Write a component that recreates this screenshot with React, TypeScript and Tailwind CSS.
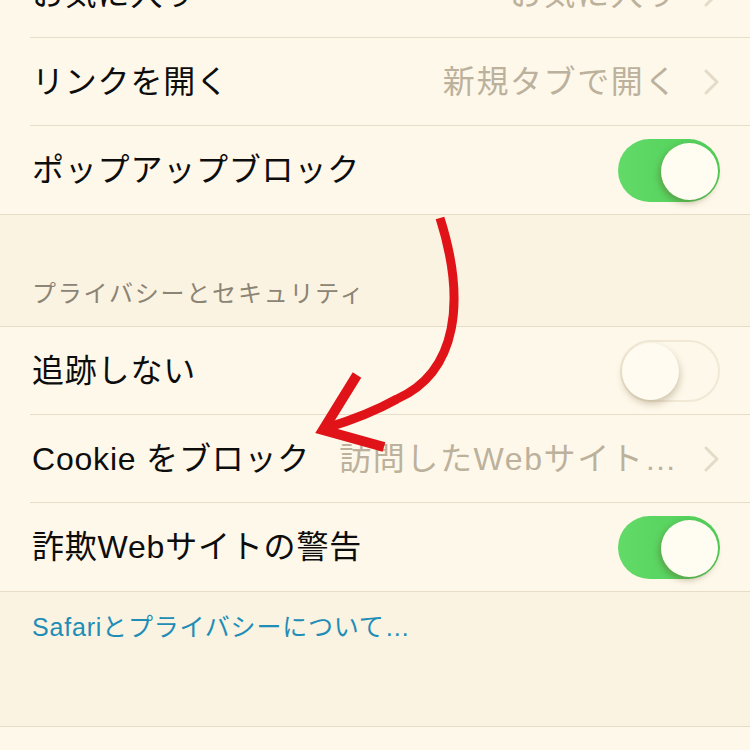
import type { ReactNode } from 'react';

const font = { fontFamily: '"Liberation Sans", "Noto Sans CJK JP", sans-serif' };

const Chevron = () => (
  <svg width="16" height="26" viewBox="0 0 16 26" className="ml-[26px] shrink-0">
    <path d="M2 2 L13 13 L2 24" fill="none" stroke="#e4dac8" strokeWidth="3" strokeLinecap="round" strokeLinejoin="round" />
  </svg>
);

const Toggle = ({ on }: { on: boolean }) =>
  on ? (
    <div className="relative h-[63px] w-[102px] shrink-0 rounded-full bg-gradient-to-r from-[#62da68] to-[#4fcf58]">
      <div className="absolute right-[2px] top-[4px] h-[57px] w-[57px] rounded-full bg-[#fffcf2] shadow-[-2px_3px_6px_rgba(90,70,30,0.35)]" />
    </div>
  ) : (
    <div className="relative h-[62px] w-[100px] shrink-0 rounded-full border-[2px] border-[#f1e8d6] bg-[#fdf8ea]">
      <div className="absolute left-0 top-[1px] h-[57px] w-[57px] rounded-full bg-[#fffbf0] shadow-[1px_4px_7px_rgba(110,85,40,0.3)]" />
    </div>
  );

const Row = ({
  label,
  children,
  last,
}: {
  label: string;
  children?: ReactNode;
  last?: boolean;
}) => (
  <div className="pl-[30px]">
    <div
      className={`flex h-[88px] items-center pl-[2px] pr-[30px] ${last ? '' : 'border-b border-[#e6dcc8]'}`}
    >
      <span className="flex-1 whitespace-nowrap text-[32px] tracking-[0.8px] text-[#0d0d0d]">{label}</span>
      {children}
    </div>
  </div>
);

const Value = ({ text }: { text: string }) => (
  <>
    <span className="whitespace-nowrap text-[32px] tracking-[1.6px] text-[#bcb19c]">{text}</span>
    <Chevron />
  </>
);

export default function App() {
  return (
    <div className="relative h-[750px] w-[750px] overflow-hidden bg-[#faf3e2]" style={font}>
      <div className="-mt-[50px] border-b border-[#e6dcc8] bg-[#fef8ea]">
        <Row label="お気に入り">
          <Value text="お気に入り" />
        </Row>
        <Row label="リンクを開く">
          <Value text="新規タブで開く" />
        </Row>
        <Row label="ポップアップブロック" last>
          <Toggle on />
        </Row>
      </div>

      <div className="flex h-[111px] items-end pb-[14px] pl-[32px]">
        <span className="text-[24px] tracking-[1.8px] text-[#8c8474]">プライバシーとセキュリティ</span>
      </div>

      <div className="border-y border-[#e6dcc8] bg-[#fef8ea]">
        <Row label="追跡しない">
          <Toggle on={false} />
        </Row>
        <Row label="Cookie をブロック">
          <Value text="訪問したWebサイト…" />
        </Row>
        <Row label="詐欺Webサイトの警告" last>
          <Toggle on />
        </Row>
      </div>

      <div className="h-[135px] border-b border-[#e6dcc8] pl-[32px] pt-[20px]">
        <span className="text-[25px] leading-[30px] tracking-[0.8px] text-[#1f8db6]">Safariとプライバシーについて…</span>
      </div>
      <div className="h-[100px] bg-[#fef8ea]" />

      <svg className="pointer-events-none absolute left-0 top-0" width="750" height="750" viewBox="0 0 750 750">
        <path
          d="M440 218 C466 300 458 372 397 399 C372 413 346 422 326 428"
          fill="none"
          stroke="#e01418"
          strokeWidth="9"
        />
        <path
          d="M357 375 L323 430 L384 447"
          fill="none"
          stroke="#e01418"
          strokeWidth="10"
          strokeLinejoin="miter"
          strokeMiterlimit="10"
        />
      </svg>
    </div>
  );
}
